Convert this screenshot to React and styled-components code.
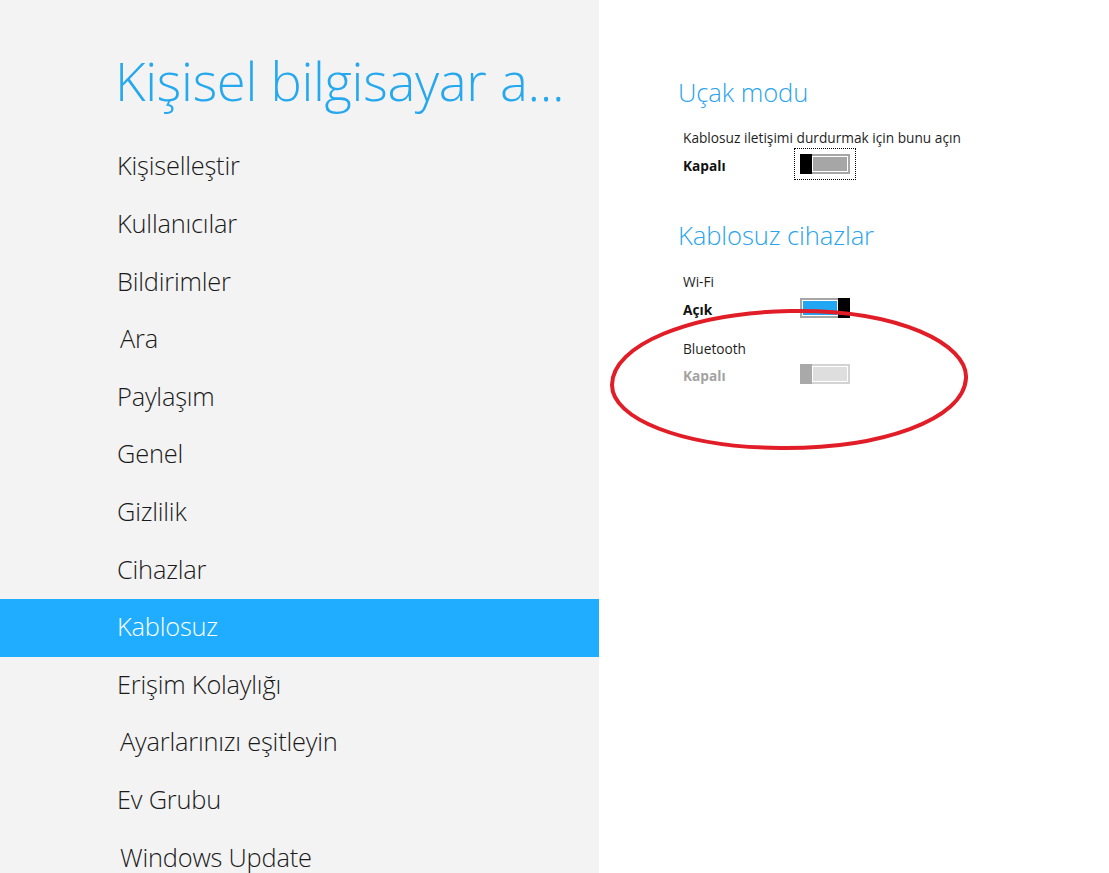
import React from "react";
import styled, { createGlobalStyle } from "styled-components";

const Global = createGlobalStyle`
  html, body { margin: 0; padding: 0; background: #fff; overflow: hidden; }
  * { box-sizing: border-box; }
  body { font-family: "Open Sans", "Noto Sans", "Liberation Sans", sans-serif; }
`;

const Page = styled.div`
  position: relative;
  width: 1109px;
  height: 873px;
  display: grid;
  grid-template-columns: 599px 1fr;
  overflow: hidden;
`;

const Sidebar = styled.nav`
  background: #f3f3f3;
  display: flex;
  flex-direction: column;
`;

const AppTitle = styled.h1`
  margin: 0;
  height: 136px;
  padding: 41px 0 0 115px;
  font-weight: 300;
  font-size: 52.6px;
  line-height: 80px;
  color: #25a8ee;
  white-space: nowrap;
  letter-spacing: -0.3px;
`;

const MenuList = styled.ul`
  list-style: none;
  margin: 0;
  padding: 0;
  margin-top: 2.2px;
`;

const MenuItem = styled.li`
  height: 57.6px;
  display: flex;
  align-items: center;
  padding: 0 0 3px ${(p) => 117 + (p.$shift || 0)}px;
  font-size: 25.4px;
  font-weight: 300;
  color: ${(p) => (p.$active ? "#ffffff" : "#1a1a1a")};
  background: ${(p) => (p.$active ? "#20adff" : "transparent")};
  white-space: nowrap;
  letter-spacing: -0.2px;
`;

const Content = styled.main`
  padding: 75px 0 0 79px;
  display: flex;
  flex-direction: column;
  color: #1e1e1e;
`;

const SectionTitle = styled.h2`
  margin: ${(p) => p.$gap || 0}px 0 0 0;
  font-size: 25.6px;
  font-weight: 300;
  line-height: 36px;
  color: #2aa4ec;
  letter-spacing: -0.1px;
`;

const Label = styled.div`
  margin: ${(p) => p.$gap || 17}px 0 0 5px;
  font-size: 13.7px;
  line-height: 20px;
  color: #1e1e1e;
`;

const SettingRow = styled.div`
  margin: ${(p) => p.$gap || 3}px 0 0 5px;
  height: 26px;
  display: grid;
  grid-template-columns: 117px auto;
  align-items: center;
`;

const StateText = styled.span`
  font-size: 13.7px;
  font-weight: 700;
  color: ${(p) => (p.$disabled ? "#a3a3a3" : "#111")};
  transform: translateY(1px);
`;

const ToggleFrame = styled.div`
  width: 50px;
  height: 20px;
  display: flex;
  flex-direction: ${(p) => (p.$on ? "row-reverse" : "row")};
  outline: ${(p) => (p.$focused ? "1px dotted #000" : "none")};
  outline-offset: 5px;
`;

const Thumb = styled.div`
  width: 12px;
  height: 20px;
  flex: none;
  background: ${(p) => p.$color};
`;

const Track = styled.div`
  flex: 1;
  height: 20px;
  border: 2px solid ${(p) => p.$border};
  ${(p) => (p.$on ? "border-right: none;" : "border-left: none;")}
  background: ${(p) => p.$fill};
  box-shadow: inset 0 0 0 1px #ffffff;
`;

const Annotation = styled.svg`
  position: absolute;
  left: 0;
  top: 0;
  pointer-events: none;
`;

function Toggle({ on, disabled, focused }) {
  const thumb = disabled ? "#a9a9a9" : "#000";
  const border = disabled ? "#d3d3d3" : "#a6a6a6";
  const fill = disabled ? "#dedede" : on ? "#20a6f2" : "#a6a6a6";
  return (
    <ToggleFrame $on={on} $focused={focused}>
      <Thumb $color={thumb} />
      <Track $on={on} $border={border} $fill={fill} />
    </ToggleFrame>
  );
}

const menu = [
  { t: "Kişiselleştir" },
  { t: "Kullanıcılar" },
  { t: "Bildirimler" },
  { t: "Ara", s: 3 },
  { t: "Paylaşım" },
  { t: "Genel" },
  { t: "Gizlilik" },
  { t: "Cihazlar" },
  { t: "Kablosuz", a: true },
  { t: "Erişim Kolaylığı" },
  { t: "Ayarlarınızı eşitleyin", s: 3 },
  { t: "Ev Grubu" },
  { t: "Windows Update", s: 3 },
];

export default function App() {
  return (
    <>
      <Global />
      <Page>
        <Sidebar>
          <AppTitle>Kişisel bilgisayar a...</AppTitle>
          <MenuList>
            {menu.map((m) => (
              <MenuItem key={m.t} $active={m.a} $shift={m.s}>
                {m.t}
              </MenuItem>
            ))}
          </MenuList>
        </Sidebar>
        <Content>
          <SectionTitle>Uçak modu</SectionTitle>
          <Label $gap={17}>Kablosuz iletişimi durdurmak için bunu açın</Label>
          <SettingRow>
            <StateText>Kapalı</StateText>
            <Toggle focused />
          </SettingRow>
          <SectionTitle $gap={41}>Kablosuz cihazlar</SectionTitle>
          <Label $gap={18}>Wi-Fi</Label>
          <SettingRow $gap={3}>
            <StateText>Açık</StateText>
            <Toggle on />
          </SettingRow>
          <Label $gap={18}>Bluetooth</Label>
          <SettingRow $gap={2}>
            <StateText $disabled>Kapalı</StateText>
            <Toggle disabled />
          </SettingRow>
        </Content>
        <Annotation width="1109" height="873" viewBox="0 0 1109 873">
          <path
            d="M 790 311 C 900 309, 968 345, 966 378 C 964 420, 880 449, 780 448 C 680 447, 612 418, 612 385 C 612 345, 690 313, 790 311 Z"
            fill="none"
            stroke="#e11d27"
            strokeWidth="4"
          />
        </Annotation>
      </Page>
    </>
  );
}
